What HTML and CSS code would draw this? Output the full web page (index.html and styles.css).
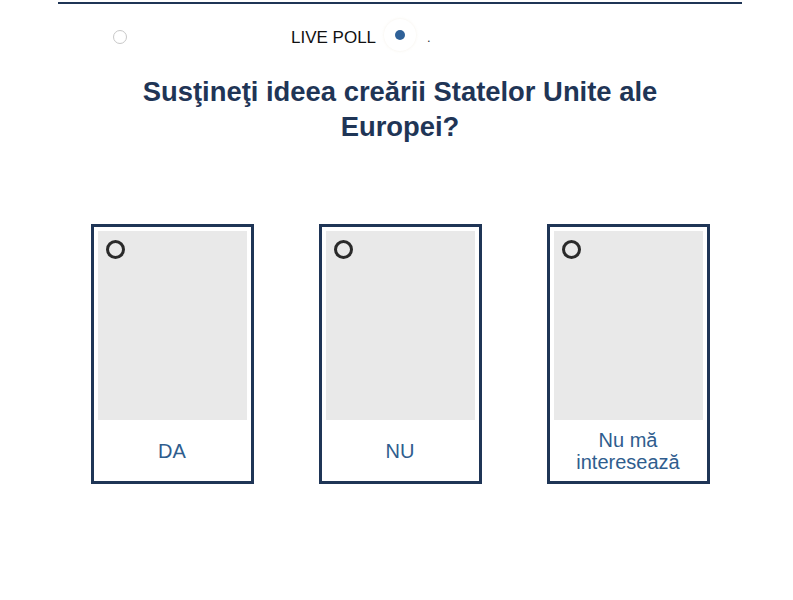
FILE: index.html
```html
<!DOCTYPE html>
<html>
<head>
<meta charset="utf-8">
<link rel="stylesheet" href="styles.css">
</head>
<body>
<div class="wrap">
  <div class="topline"></div>
  <div class="header">
    <span class="ring"></span>
    <span class="live">LIVE POLL</span>
    <span class="dotwrap"><span class="dot"></span></span>
    <span class="period">.</span>
  </div>
  <h1 class="title">Susţineţi ideea creării Statelor Unite ale Europei?</h1>
  <div class="cards">
    <div class="card">
      <div class="pic"><span class="radio"></span></div>
      <div class="label">DA</div>
    </div>
    <div class="card">
      <div class="pic"><span class="radio"></span></div>
      <div class="label">NU</div>
    </div>
    <div class="card">
      <div class="pic"><span class="radio"></span></div>
      <div class="label">Nu mă<br>interesează</div>
    </div>
  </div>
</div>
</body>
</html>
```
FILE: styles.css
```css
html, body {
  margin: 0;
  padding: 0;
  background: #ffffff;
  font-family: "Liberation Sans", Arial, sans-serif;
}
.wrap {
  width: 684px;
  margin-left: 58px;
  padding-top: 2px;
}
.topline {
  height: 2px;
  background: #1f3556;
}
.header {
  position: relative;
  height: 62px;
}
.ring {
  position: absolute;
  left: 55px;
  top: 26px;
  width: 12px;
  height: 12px;
  border: 1px solid #c8c8c8;
  border-radius: 50%;
}
.live {
  position: absolute;
  left: 233px;
  top: 24px;
  font-size: 17px;
  color: #111111;
}
.dotwrap {
  position: absolute;
  left: 326px;
  top: 15px;
  width: 32px;
  height: 32px;
  border-radius: 50%;
  box-shadow: 0 0 3px rgba(230, 220, 200, 0.4);
  display: flex;
  align-items: center;
  justify-content: center;
}
.dot {
  width: 10px;
  height: 10px;
  border-radius: 50%;
  background: #2f6198;
}
.period {
  position: absolute;
  left: 369px;
  top: 26px;
  font-size: 13px;
  color: #333;
}
.title {
  margin: 8px auto 0;
  width: 580px;
  text-align: center;
  font-size: 27.4px;
  line-height: 35px;
  font-weight: bold;
  color: #1f3556;
}
.cards {
  display: flex;
  justify-content: center;
  gap: 65px;
  margin-top: 80px;
}
.card {
  border: 3px solid #1f3556;
  padding: 4px 4px 0;
  box-sizing: content-box;
  width: 149px;
  height: 250px;
  display: flex;
  flex-direction: column;
}
.pic {
  position: relative;
  height: 189px;
  background: #e9e9e9;
}
.radio {
  position: absolute;
  left: 8px;
  top: 9px;
  width: 13px;
  height: 13px;
  border: 3px solid #2a2a2a;
  border-radius: 50%;
}
.label {
  flex: 1;
  display: flex;
  align-items: center;
  justify-content: center;
  text-align: center;
  font-size: 20px;
  line-height: 22px;
  color: #2f5d8e;
  padding-top: 1px;
}
```
